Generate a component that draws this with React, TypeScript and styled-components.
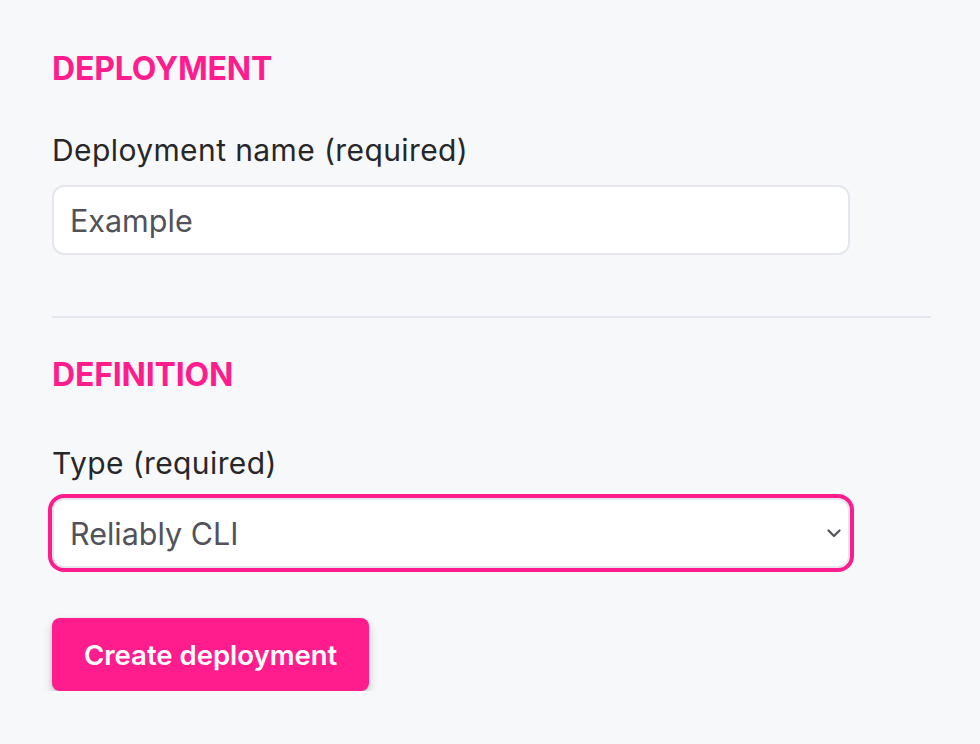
import styled, { createGlobalStyle } from "styled-components";

const GlobalStyle = createGlobalStyle`
	html, body {
		margin: 0;
		padding: 0;
		background: #f7f8fa;
	}
	body {
		font-family: Inter, "Liberation Sans", sans-serif;
		color: #27272a;
	}
`;

function Chevron() {
	return (
		<svg width="14" height="9" viewBox="0 0 14 9" fill="none">
			<path
				d="M1.5 1.5L7 7L12.5 1.5"
				stroke="#52525b"
				strokeWidth="2.2"
				strokeLinecap="round"
				strokeLinejoin="round"
			/>
		</svg>
	);
}

function App() {
	return (
		<>
			<GlobalStyle />
			<Page>
				<Section>
					<Heading>Deployment</Heading>
					<Field>
						<Label htmlFor="name">Deployment name (required)</Label>
						<Input id="name" defaultValue="Example" />
					</Field>
				</Section>
				<Divider />
				<Section $compact>
					<Heading>Definition</Heading>
					<Field>
						<Label htmlFor="type">Type (required)</Label>
						<SelectWrap>
							<Select id="type" defaultValue="cli">
								<option value="cli">Reliably CLI</option>
							</Select>
							<span className="chevron">
								<Chevron />
							</span>
						</SelectWrap>
					</Field>
				</Section>
				<Button type="button">Create deployment</Button>
			</Page>
		</>
	);
}

const Page = styled.div`
	width: 879px;
	padding: 49px 0 0 52px;
	display: flex;
	flex-direction: column;
	align-items: flex-start;
`;

const Section = styled.section<{ $compact?: boolean }>`
	display: flex;
	flex-direction: column;
	gap: ${(p) => (p.$compact ? "50px" : "43px")};
	width: 100%;
`;

const Heading = styled.h2`
	margin: 0;
	font-size: 32px;
	line-height: 40px;
	font-weight: 700;
	letter-spacing: -0.2px;
	text-transform: uppercase;
	color: #ff1d8e;
`;

const Field = styled.div`
	display: flex;
	flex-direction: column;
	gap: 17px;
`;

const Label = styled.label`
	font-size: 30px;
	line-height: 36px;
	font-weight: 400;
	letter-spacing: 0.4px;
	color: #27272a;
`;

const Input = styled.input`
	box-sizing: border-box;
	width: 798px;
	height: 70px;
	padding: 0 16px;
	border: 2px solid #e6e7ee;
	border-radius: 12px;
	background: #fff;
	font-family: inherit;
	font-size: 30.5px;
	color: #52525b;
	outline: none;
`;

const Divider = styled.hr`
	width: 100%;
	height: 2px;
	margin: 61px 0 37px;
	border: none;
	background: #e6e7ee;
`;

const SelectWrap = styled.div`
	position: relative;
	width: 798px;
	height: 70px;
	.chevron {
		position: absolute;
		right: 9px;
		top: 31px;
		display: flex;
		pointer-events: none;
	}
`;

const Select = styled.select`
	box-sizing: border-box;
	width: 100%;
	height: 100%;
	padding: 0 16px;
	appearance: none;
	border: 2px solid #e6e7ee;
	border-radius: 12px;
	background: #fff;
	box-shadow: 0 0 0 4px #ff1d8e;
	font-family: inherit;
	font-size: 30.5px;
	color: #52525b;
	outline: none;
`;

const Button = styled.button`
	margin-top: 50px;
	height: 73px;
	padding: 0 32px;
	border: none;
	border-radius: 8px;
	background: #ff1d8e;
	color: #fff;
	font-family: inherit;
	font-size: 27.5px;
	font-weight: 600;
	box-shadow: 0 5px 10px rgba(0, 0, 0, 0.2), 0 1px 3px rgba(0, 0, 0, 0.12);
	cursor: pointer;
`;

export default App;
